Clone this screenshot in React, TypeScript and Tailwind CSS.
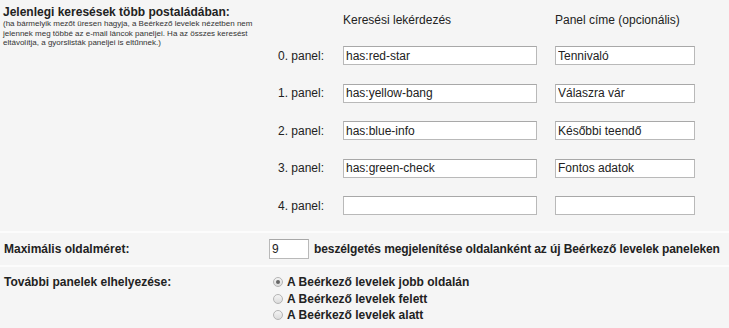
import type { ReactNode } from 'react'

const panels = [
  { query: 'has:red-star', title: 'Tennivaló' },
  { query: 'has:yellow-bang', title: 'Válaszra vár' },
  { query: 'has:blue-info', title: 'Későbbi teendő' },
  { query: 'has:green-check', title: 'Fontos adatok' },
  { query: '', title: '' },
]

function TextBox({ value, className = '' }: { value: string; className?: string }) {
  return (
    <input
      type="text"
      defaultValue={value}
      className={`h-[19px] border border-[#b9b9b9] border-t-[#a8a8a8] bg-white px-[2px] text-[12px] leading-[17px] text-[#222] outline-none ${className}`}
    />
  )
}

function Radio({ checked, children }: { checked?: boolean; children: ReactNode }) {
  return (
    <label className="flex h-[16.5px] items-center">
      <span className="flex h-[10px] w-[10px] items-center justify-center rounded-full border border-[#b4b4b4] bg-gradient-to-b from-[#f4f4f4] to-[#dcdcdc]">
        {checked && <span className="h-[4px] w-[4px] rounded-full bg-[#666]" />}
      </span>
      <span className="ml-[4px] text-[12px] font-bold text-[#222]">{children}</span>
    </label>
  )
}

export default function App() {
  return (
    <div className="h-[328px] w-[729px] overflow-hidden bg-[#f5f5f5] font-['Liberation_Sans',Arial,sans-serif] text-[#222]">
      <div className="flex h-[233px] border-b-2 border-[#fcfcfc]">
        <div className="w-[262px] pl-[3px] pt-[5px]">
          <p className="text-[12px] font-bold leading-[14px] text-[#222]">
            Jelenlegi keresések több postaládában:
          </p>
          <p className="whitespace-nowrap text-[8px] leading-[9.5px] text-[#333]">
            (ha bármelyik mezőt üresen hagyja, a Beérkező levelek nézetben nem
            <br />
            jelennek meg többé az e-mail láncok paneljei. Ha az összes keresést
            <br />
            eltávolítja, a gyorslisták paneljei is eltűnnek.)
          </p>
        </div>

        <div className="pt-[13px]">
          <div className="grid grid-cols-[63px_194px_140px] gap-x-[18px] text-[12px] leading-[14px]">
            <span />
            <span>Keresési lekérdezés</span>
            <span>Panel címe (opcionális)</span>
          </div>
          <div className="mt-[19px] grid grid-cols-[63px_194px_140px] gap-x-[18px] gap-y-[18.5px]">
            {panels.map((p, i) => (
              <div key={i} className="contents">
                <span className="flex items-center justify-end pr-[1px] text-[12px]">{i}. panel:</span>
                <TextBox value={p.query} className="w-[194px]" />
                <TextBox value={p.title} className="w-[140px]" />
              </div>
            ))}
          </div>
        </div>
      </div>

      <div className="flex h-[34px] items-center border-b-2 border-[#fcfcfc]">
        <span className="w-[269px] pl-[4px] text-[12px] font-bold">Maximális oldalméret:</span>
        <input
          type="text"
          defaultValue="9"
          className="h-[20px] w-[40px] border border-[#b9b9b9] border-t-[#a8a8a8] bg-white px-[2px] text-[12px] text-[#222] outline-none"
        />
        <span className="ml-[5px] whitespace-nowrap text-[12px] font-bold tracking-[-0.1px]">
          beszélgetés megjelenítése oldalanként az új Beérkező levelek paneleken
        </span>
      </div>

      <div className="flex pt-[7px]">
        <span className="w-[273px] pl-[4px] text-[12px] font-bold leading-[16.5px]">
          További panelek elhelyezése:
        </span>
        <div className="flex flex-col">
          <Radio checked>A Beérkező levelek jobb oldalán</Radio>
          <Radio>A Beérkező levelek felett</Radio>
          <Radio>A Beérkező levelek alatt</Radio>
        </div>
      </div>
    </div>
  )
}
